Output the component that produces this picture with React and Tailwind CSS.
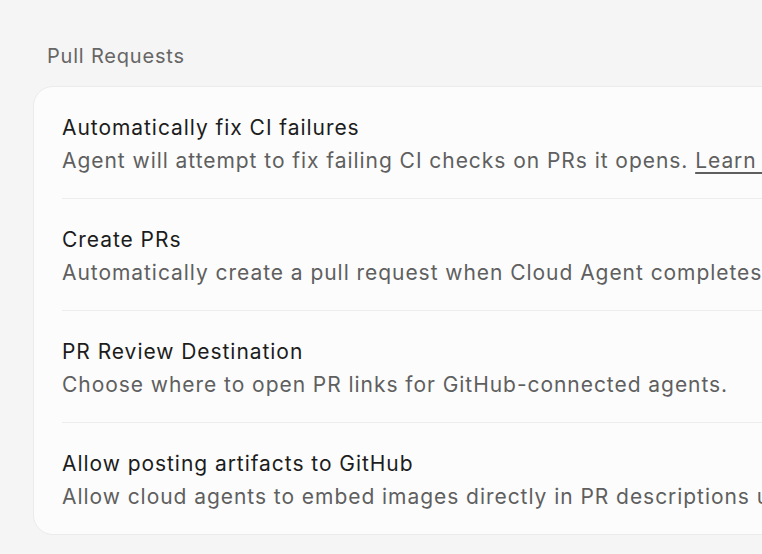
const rows = [
  {
    title: 'Automatically fix CI failures',
    desc: 'Agent will attempt to fix failing CI checks on PRs it opens.',
    link: 'Learn more',
  },
  {
    title: 'Create PRs',
    desc: 'Automatically create a pull request when Cloud Agent completes its work.',
  },
  {
    title: 'PR Review Destination',
    desc: 'Choose where to open PR links for GitHub-connected agents.',
  },
  {
    title: 'Allow posting artifacts to GitHub',
    desc: 'Allow cloud agents to embed images directly in PR descriptions using GitHub.',
  },
];

export default function App() {
  return (
    <div className="w-[762px] h-[554px] overflow-hidden bg-[#f5f5f5] font-['Inter',sans-serif]">
      <div className="pt-[43px] pl-[47px] text-[20px] tracking-[0.8px] text-[#666666] leading-[26px]">Pull Requests</div>
      <div className="mt-[17px] ml-[33px] w-[860px] rounded-[20px] border border-[#ebebeb] bg-[#fcfcfc] px-[28px]">
        {rows.map((r, i) => (
          <div
            key={r.title}
            className={'pt-[24px] pb-[21px] whitespace-nowrap ' + (i < rows.length - 1 ? 'border-b border-[#ececec]' : '')}
          >
            <div className="text-[21px] tracking-[0.95px] leading-[34px] text-[#1c1c1c]">{r.title}</div>
            <div className="text-[21px] tracking-[0.95px] leading-[32px] text-[#5f5f5f]">
              {r.desc}
              {r.link && (
                <>
                  {' '}
                  <span className="underline underline-offset-[4px]">{r.link}</span>
                </>
              )}
            </div>
          </div>
        ))}
      </div>
    </div>
  );
}
